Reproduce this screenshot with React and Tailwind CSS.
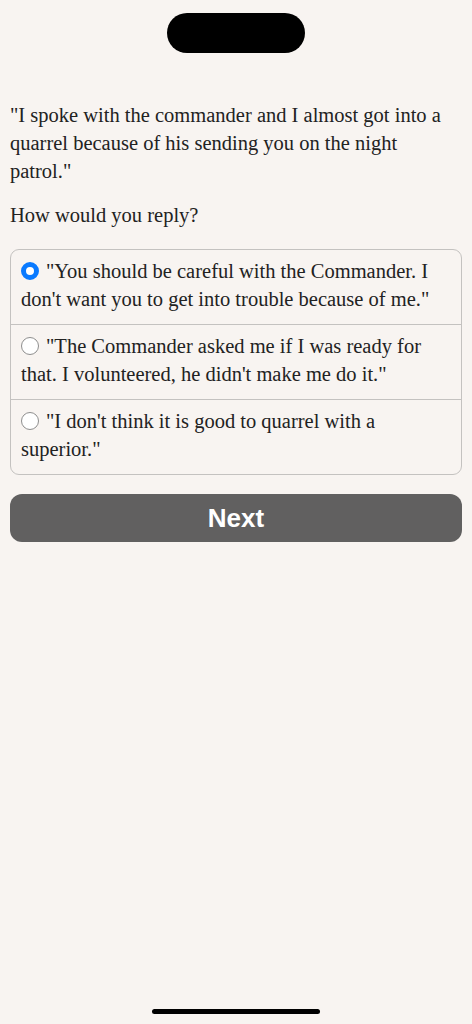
import { useState } from 'react'

const options = [
    `"You should be careful with the Commander. I don't want you to get into trouble because of me."`,
    `"The Commander asked me if I was ready for that. I volunteered, he didn't make me do it."`,
    `"I don't think it is good to quarrel with a superior."`,
]

const Radio = ({ checked }) => (
    <span
        className={`inline-block align-[-2px] w-[18px] h-[18px] rounded-full mr-[7px] bg-white ${checked ? 'border-[5px] border-[#0a7aff]' : 'border-[1.5px] border-[#8e8e8e]'}`}
    />
)

const App = () => {
    const [selected, setSelected] = useState(0)

    return (
        <div className="min-h-screen w-full bg-[#f8f4f1] flex flex-col text-[#222]" style={{ fontFamily: '"Liberation Serif", "DejaVu Serif", serif' }}>
            {/* status bar island */}
            <div className="flex justify-center pt-[13px]">
                <div className="w-[138px] h-[40px] rounded-full bg-black" />
            </div>

            <div className="px-[10px] pt-[48px]">
                <p className="text-[20.5px] leading-[28px]">
                    "I spoke with the commander and I almost got into a quarrel because of his sending you on the night patrol."
                </p>
                <p className="text-[20.5px] leading-[28px] mt-[16px]">How would you reply?</p>

                <div className="mt-[20px] border border-[#c4c2c0] rounded-[9px] overflow-hidden">
                    {options.map((o, i) => (
                        <div
                            key={i}
                            onClick={() => setSelected(i)}
                            className={`px-[10px] pt-[7px] pb-[11px] text-[20.5px] leading-[28px] cursor-pointer ${i > 0 ? 'border-t border-[#c4c2c0]' : ''}`}
                        >
                            <Radio checked={selected === i} />
                            {o}
                        </div>
                    ))}
                </div>

                <button
                    className="mt-[19px] w-full h-[48px] rounded-[12px] bg-[#616060] text-white text-[26px] font-bold"
                    style={{ fontFamily: '"Liberation Sans", Arial, sans-serif' }}
                >
                    Next
                </button>
            </div>

            <div className="flex-1" />
            <div className="flex justify-center pb-[10px]">
                <div className="w-[168px] h-[5px] rounded-full bg-black" />
            </div>
        </div>
    )
}

export default App
